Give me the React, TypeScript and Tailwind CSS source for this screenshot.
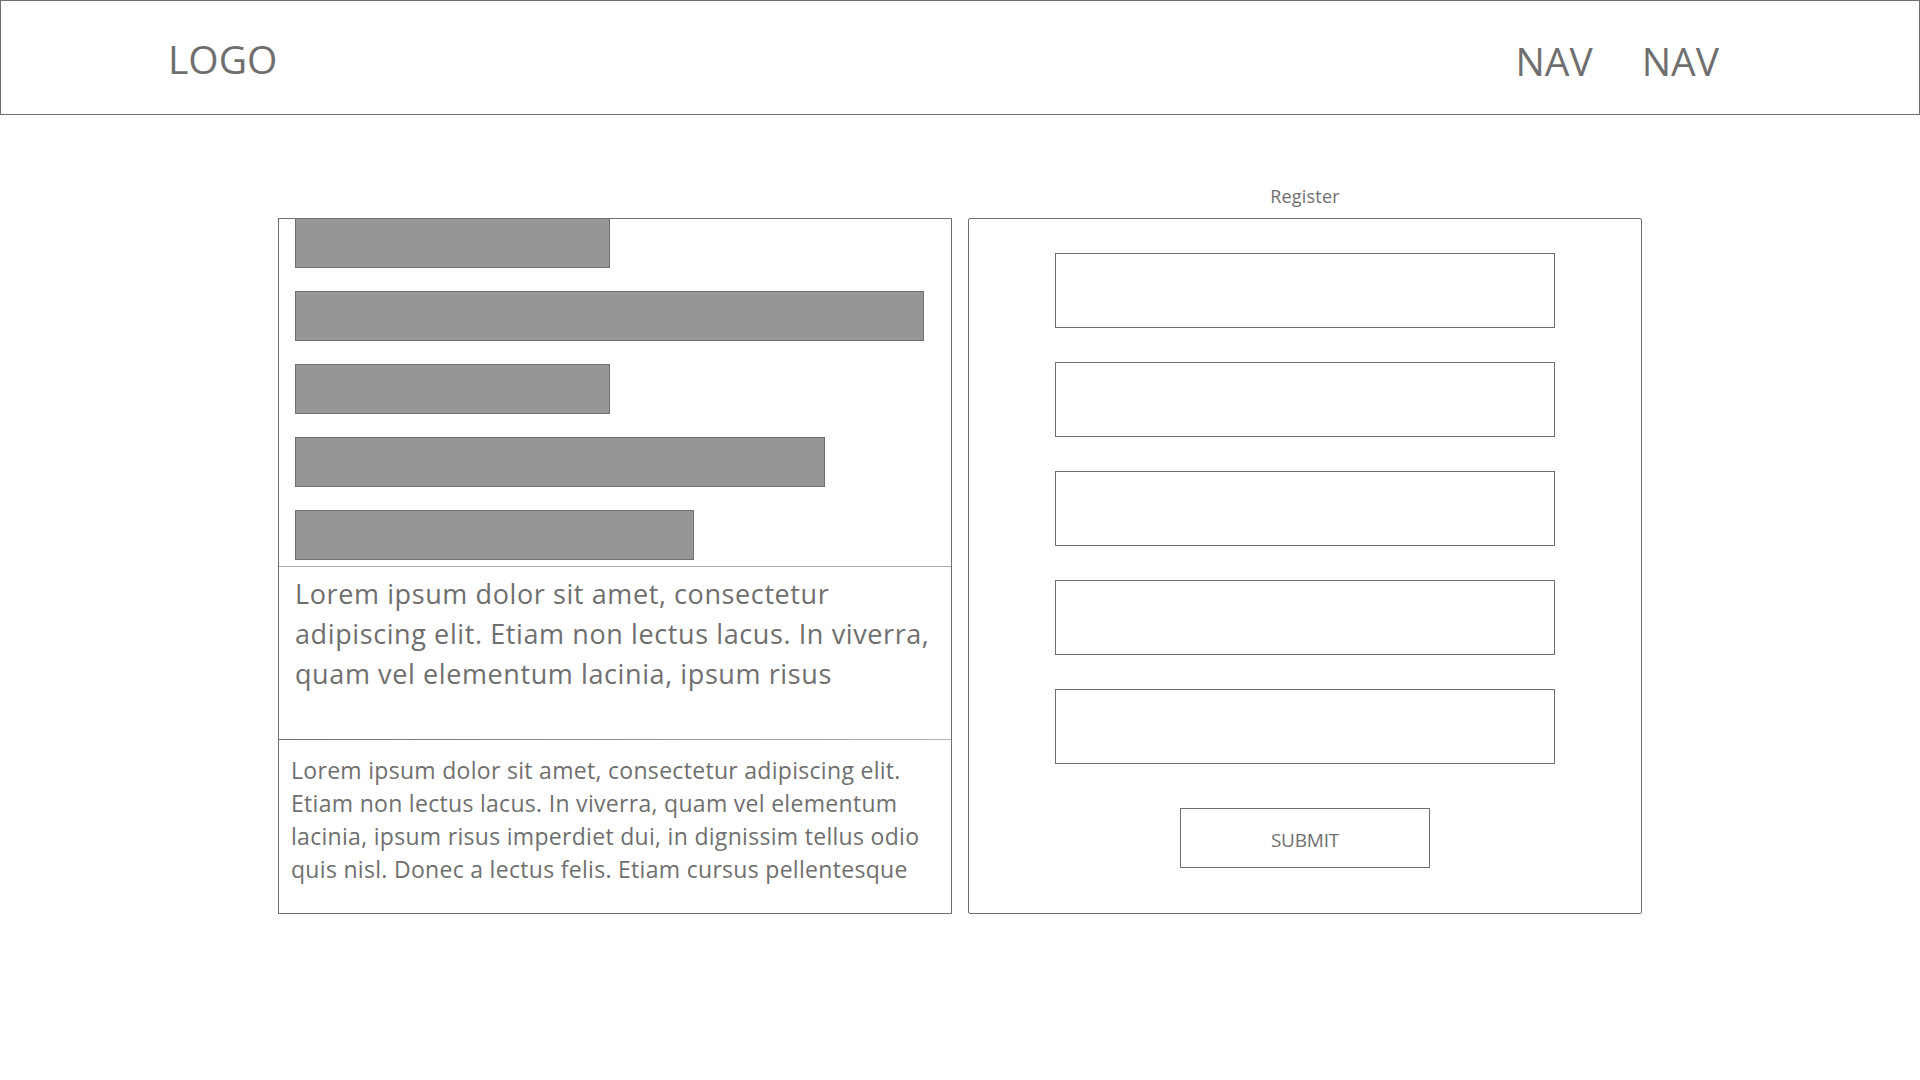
import React from "react";

const bars = [315, 629, 315, 530, 399];

function Header() {
  return (
    <header className="flex items-start h-[115px] border border-[#707070] text-[#6f6f6f]">
      <div className="ml-[167px] mt-[30px] text-[39px] leading-[56px]">LOGO</div>
      <nav className="ml-auto mr-[200px] mt-[32px] flex gap-[49px] text-[39px] leading-[56px]">
        <span>NAV</span>
        <span>NAV</span>
      </nav>
    </header>
  );
}

function InfoPanel() {
  return (
    <div className="h-[696px] border border-[#707070] flex flex-col">
      <div className="h-[348px] flex-shrink-0 border-b border-[#ababab] pl-[16px] flex flex-col gap-[23px]">
        {bars.map((w, i) => (
          <div
            key={i}
            className={`h-[50px] bg-[#969694] border border-[#707070] ${i === 0 ? "-mt-px" : ""}`}
            style={{ width: w }}
          />
        ))}
      </div>
      <div className="h-[172px] flex-shrink-0 pl-[16px] pt-[7px] text-[27px] leading-[40px] tracking-[0.6px] whitespace-nowrap">
        Lorem ipsum dolor sit amet, consectetur
        <br />
        adipiscing elit. Etiam non lectus lacus. In viverra,
        <br />
        quam vel elementum lacinia, ipsum risus
      </div>
      {/* divider fades out toward the right */}
      <div className="h-px flex-shrink-0 bg-gradient-to-r from-[#707070] to-[#b4b4b4]" />
      <div className="flex-1 pl-[12px] pt-[14px] text-[23px] leading-[33px] tracking-[0.3px] whitespace-nowrap">
        Lorem ipsum dolor sit amet, consectetur adipiscing elit.
        <br />
        Etiam non lectus lacus. In viverra, quam vel elementum
        <br />
        lacinia, ipsum risus imperdiet dui, in dignissim tellus odio
        <br />
        quis nisl. Donec a lectus felis. Etiam cursus pellentesque
      </div>
    </div>
  );
}

function RegisterPanel() {
  return (
    <div className="h-[696px] border border-[#707070] rounded-[2px] flex flex-col items-center pt-[34px]">
      <div className="flex flex-col gap-[34px]">
        {[0, 1, 2, 3, 4].map((i) => (
          <input
            key={i}
            className="block w-[500px] h-[75px] border border-[#707070] bg-white outline-none"
          />
        ))}
      </div>
      <button className="mt-[44px] w-[250px] h-[60px] border border-[#707070] pt-[4px] text-[19px] tracking-[-0.2px] text-[#6f6f6f]">
        SUBMIT
      </button>
    </div>
  );
}

export default function App() {
  return (
    <div
      className="w-[1920px] h-[1080px] bg-white text-[#6f6f6f] overflow-hidden"
      style={{ fontFamily: '"Open Sans", "Noto Sans", sans-serif' }}
    >
      <Header />
      <main className="pt-[69px] flex justify-center">
        <div className="grid grid-cols-[674px_674px] gap-x-[16px] gap-y-[10px]">
          <div />
          <div className="h-[24px] text-center text-[18px] leading-[24px] tracking-[0.2px]">Register</div>
          <InfoPanel />
          <RegisterPanel />
        </div>
      </main>
    </div>
  );
}
